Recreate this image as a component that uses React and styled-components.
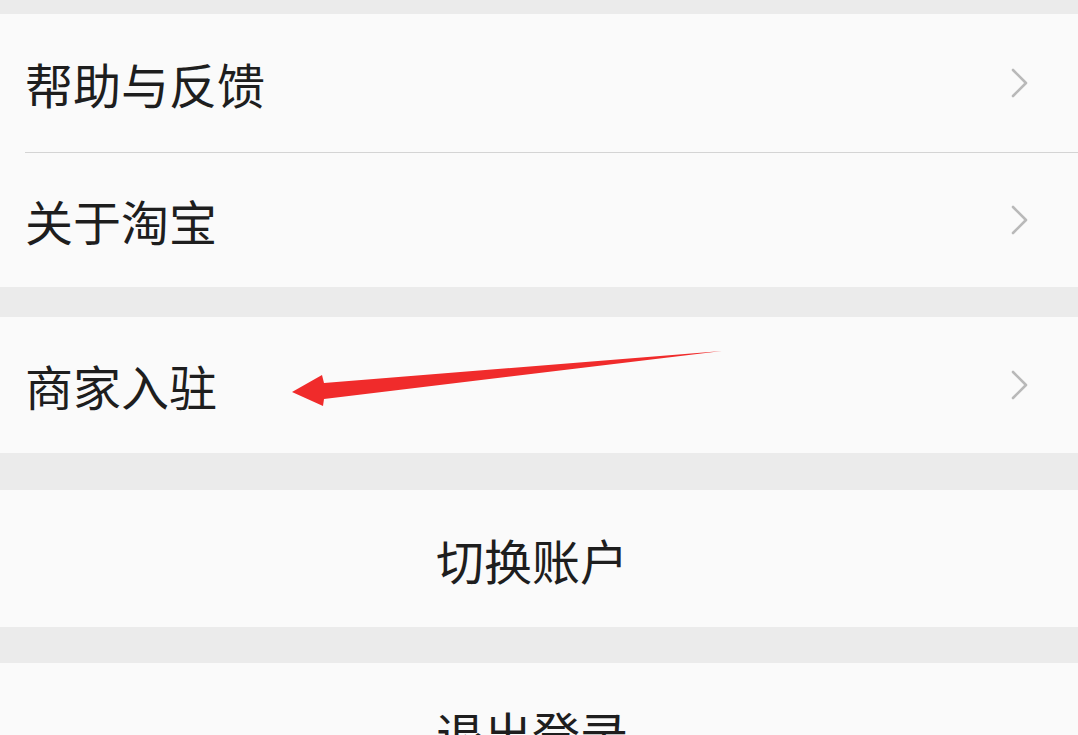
import React from "react";
import styled, { createGlobalStyle } from "styled-components";

const GlobalStyle = createGlobalStyle`
  html, body {
    margin: 0;
    padding: 0;
    background: #ebebeb;
    overflow: hidden;
  }
  body {
    font-family: "Noto Sans CJK SC", "Noto Sans", sans-serif;
  }
`;

const Page = styled.div`
  display: flex;
  flex-direction: column;
  padding-top: 14px;
  width: 1078px;
`;

const Group = styled.div`
  background: #fafafa;
  margin-top: ${(p) => p.gap || 0}px;
  display: flex;
  flex-direction: column;
`;

const Row = styled.div`
  position: relative;
  height: ${(p) => p.h || 136}px;
  display: flex;
  align-items: center;
  justify-content: ${(p) => (p.center ? "center" : "space-between")};
  padding: ${(p) => (p.center ? "0 14px 0 0" : "0 48px 0 25px")};
  box-sizing: border-box;
  border-bottom: ${(p) => (p.divider ? "1px solid #d6d6d6" : "none")};
`;

const Divided = styled.div`
  margin-left: 25px;
  border-top: 1px solid #d4d4d4;
`;

const Label = styled.span`
  font-size: 48px;
  line-height: 1;
  color: #1e1e1e;
  letter-spacing: 0;
`;

const Chevron = () => (
  <svg width="20" height="32" viewBox="0 0 20 32" fill="none">
    <path
      d="M3 3 L16 16 L3 29"
      stroke="#b9b9b9"
      strokeWidth="2.6"
      strokeLinecap="round"
      strokeLinejoin="round"
    />
  </svg>
);

const ArrowMark = styled.svg`
  position: absolute;
  left: 288px;
  top: 30px;
  overflow: visible;
`;

const RedArrow = () => (
  <ArrowMark width="440" height="60" viewBox="0 0 440 60">
    <path
      d="M4 45 L34 28 L36 36 L434 4 L36 52 L35 59 Z"
      fill="#f02b2b"
    />
  </ArrowMark>
);

export default function App() {
  return (
    <>
      <GlobalStyle />
      <Page>
        <Group>
          <Row h={138}>
            <Label>帮助与反馈</Label>
            <Chevron />
          </Row>
          <Divided />
          <Row h={134}>
            <Label>关于淘宝</Label>
            <Chevron />
          </Row>
        </Group>
        <Group gap={30}>
          <Row h={136}>
            <Label>商家入驻</Label>
            <Chevron />
            <RedArrow />
          </Row>
        </Group>
        <Group gap={37}>
          <Row h={137} center>
            <Label>切换账户</Label>
          </Row>
        </Group>
        <Group gap={36}>
          <Row h={137} center>
            <Label>退出登录</Label>
          </Row>
        </Group>
      </Page>
    </>
  );
}
